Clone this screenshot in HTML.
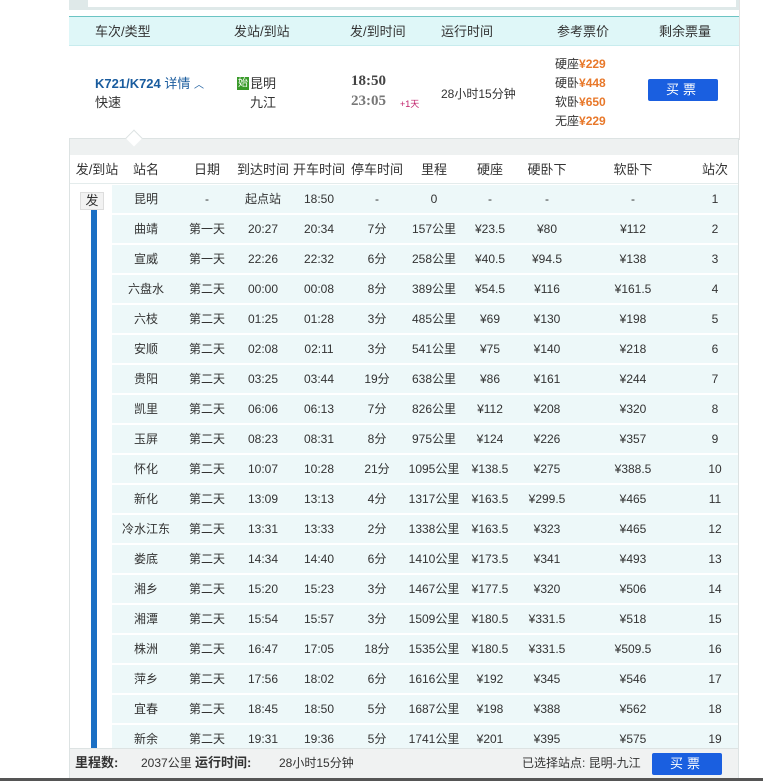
<!DOCTYPE html>
<html><head><meta charset="utf-8"><style>
*{margin:0;padding:0;box-sizing:border-box}
body{width:763px;height:781px;overflow:hidden;background:#fff;font-family:"Liberation Sans","Noto Sans CJK SC",sans-serif;font-size:12px;line-height:16px;color:#333;position:relative}
.a{position:absolute;white-space:nowrap;line-height:16px;height:16px}
.c{position:absolute;transform:translateX(-50%);white-space:nowrap;line-height:16px;height:16px}
.row{position:absolute;left:112px;width:626px;height:28px;background:#edf8f9}
.o{color:#e8782a;font-weight:bold}
.btn{position:absolute;background:#1a5fe0;color:#fff;text-align:center;border-radius:2px;font-size:13px;letter-spacing:4px}
</style></head><body>
<div class="a" style="left:69px;top:0;width:670px;height:10px;background:#dfe9e9"></div>
<div class="a" style="left:88px;top:0;width:648px;height:7px;background:#fff"></div>
<div class="a" style="left:739px;top:0;width:1px;height:140px;background:#e2e2e2"></div>
<div class="a" style="left:69px;top:16px;width:670px;height:30px;background:#dff7f8;border-top:1px solid #6cc4c4;border-bottom:1px solid #c8ecee"></div>
<div class="a" style="left:95px;top:24px;font-size:13px">车次/类型</div>
<div class="a" style="left:234px;top:24px;font-size:13px">发站/到站</div>
<div class="a" style="left:350px;top:24px;font-size:13px">发/到时间</div>
<div class="a" style="left:441px;top:24px;font-size:13px">运行时间</div>
<div class="a" style="left:557px;top:24px;font-size:13px">参考票价</div>
<div class="a" style="left:659px;top:24px;font-size:13px">剩余票量</div>
<div class="a" style="left:95px;top:76px;font-size:13px;color:#1a5c9e"><b>K721/K724</b> 详情 <span style="font-size:10px">︿</span></div>
<div class="a" style="left:95px;top:95px;font-size:13px">快速</div>
<div class="a" style="left:237px;top:77px;width:12px;height:13px;background:#3a9a2a;color:#fff;font-size:10px;text-align:center;line-height:13px">始</div>
<div class="a" style="left:250px;top:76px;font-size:13px">昆明</div>
<div class="a" style="left:250px;top:95px;font-size:13px">九江</div>
<div class="a" style="left:351px;top:73px;font-size:15px;font-weight:bold;color:#444;font-family:'Liberation Serif',serif">18:50</div>
<div class="a" style="left:351px;top:93px;font-size:15px;font-weight:bold;color:#777;font-family:'Liberation Serif',serif">23:05</div>
<div class="a" style="left:400px;top:96px;font-size:9px;color:#c0206a">+1天</div>
<div class="a" style="left:441px;top:86px">28小时15分钟</div>
<div class="a" style="left:555px;top:56px">硬座<span class="o">¥229</span></div>
<div class="a" style="left:555px;top:75px">硬卧<span class="o">¥448</span></div>
<div class="a" style="left:555px;top:94px">软卧<span class="o">¥650</span></div>
<div class="a" style="left:555px;top:113px">无座<span class="o">¥229</span></div>
<div class="btn" style="left:648px;top:79px;width:70px;height:22px;line-height:22px">买票</div>
<div class="a" style="left:69px;top:138px;width:670px;height:643px;border:1px solid #dde3e3;background:#fff"></div>
<div class="a" style="left:70px;top:139px;width:668px;height:16px;background:#eef1f1"></div>
<div class="a" style="left:128px;top:132px;width:12px;height:12px;transform:rotate(45deg);background:#fff;border-left:1px solid #dde3e3;border-top:1px solid #dde3e3"></div>
<div class="a" style="left:70px;top:183px;width:668px;height:1px;background:#e4ecec"></div>
<div id="hd"></div>
<div id="rows"></div>
<div class="a" style="left:91px;top:210px;width:6px;height:540px;background:#1a6fc4"></div>
<div class="a" style="left:80px;top:192px;width:24px;height:18px;background:#f2f2f2;border:1px solid #ddd;font-size:13px;text-align:center;line-height:16px">发</div>
<div class="a" style="left:70px;top:748px;width:668px;height:30px;background:#f0f2f2;border-top:1px solid #dde3e3"></div>
<div class="a" style="left:75px;top:755px;font-weight:bold;font-size:13px">里程数:</div>
<div class="a" style="left:141px;top:755px">2037公里 <b style="font-size:13px">运行时间:</b></div>
<div class="a" style="left:279px;top:755px">28小时15分钟</div>
<div class="a" style="left:522px;top:755px">已选择站点: 昆明-九江</div>
<div class="btn" style="left:652px;top:753px;width:70px;height:22px;line-height:22px">买票</div>
<div class="a" style="left:0;top:778px;width:763px;height:3px;background:#555"></div>
<script>
var cx=[97,146,207,263,319,377,434,490,547,633,715];
var H=["发/到站","站名","日期","到达时间","开车时间","停车时间","里程","硬座","硬卧下","软卧下","站次"];
var s="";H.forEach(function(t,i){s+='<div class="c" style="left:'+cx[i]+'px;top:162px;font-size:13px">'+t+'</div>'});
var D=[["昆明","-","起点站","18:50","-","0","-","-","-"],
["曲靖","第一天","20:27","20:34","7分","157公里","¥23.5","¥80","¥112"],
["宣威","第一天","22:26","22:32","6分","258公里","¥40.5","¥94.5","¥138"],
["六盘水","第二天","00:00","00:08","8分","389公里","¥54.5","¥116","¥161.5"],
["六枝","第二天","01:25","01:28","3分","485公里","¥69","¥130","¥198"],
["安顺","第二天","02:08","02:11","3分","541公里","¥75","¥140","¥218"],
["贵阳","第二天","03:25","03:44","19分","638公里","¥86","¥161","¥244"],
["凯里","第二天","06:06","06:13","7分","826公里","¥112","¥208","¥320"],
["玉屏","第二天","08:23","08:31","8分","975公里","¥124","¥226","¥357"],
["怀化","第二天","10:07","10:28","21分","1095公里","¥138.5","¥275","¥388.5"],
["新化","第二天","13:09","13:13","4分","1317公里","¥163.5","¥299.5","¥465"],
["冷水江东","第二天","13:31","13:33","2分","1338公里","¥163.5","¥323","¥465"],
["娄底","第二天","14:34","14:40","6分","1410公里","¥173.5","¥341","¥493"],
["湘乡","第二天","15:20","15:23","3分","1467公里","¥177.5","¥320","¥506"],
["湘潭","第二天","15:54","15:57","3分","1509公里","¥180.5","¥331.5","¥518"],
["株洲","第二天","16:47","17:05","18分","1535公里","¥180.5","¥331.5","¥509.5"],
["萍乡","第二天","17:56","18:02","6分","1616公里","¥192","¥345","¥546"],
["宜春","第二天","18:45","18:50","5分","1687公里","¥198","¥388","¥562"],
["新余","第二天","19:31","19:36","5分","1741公里","¥201","¥395","¥575"]];
var r="";D.forEach(function(d,k){var y=185+k*30;var h=k==18?23:28;r+='<div class="row" style="top:'+y+'px;height:'+h+'px"></div>';
d.forEach(function(t,i){r+='<div class="c" style="left:'+cx[i+1]+'px;top:'+(y+6)+'px">'+t+'</div>'});
r+='<div class="c" style="left:'+cx[10]+'px;top:'+(y+6)+'px">'+(k+1)+'</div>'});
document.getElementById("hd").outerHTML=s;document.getElementById("rows").outerHTML=r;
</script>
</body></html>
